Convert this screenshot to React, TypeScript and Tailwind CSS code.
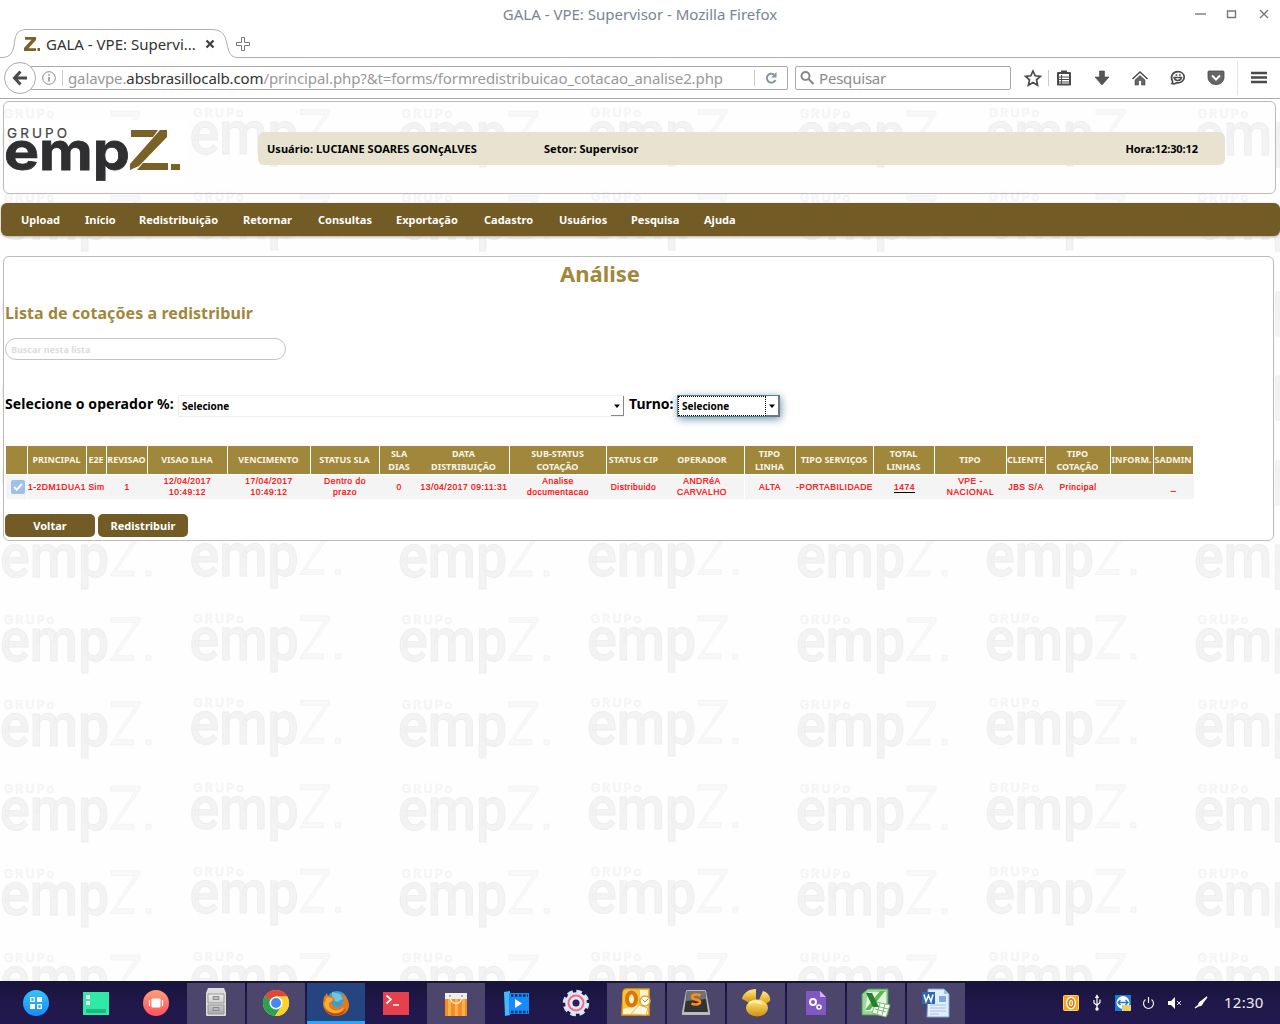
import React from "react";

const SANS = "font-['Noto_Sans',sans-serif]";

function WatermarkLayer() {
  const tiles: { x: number; y: number }[] = [];
  for (let row = 0; row < 11; row++) {
    [0, 189.5, 398, 587, 796, 985, 1194].forEach((x, i) => {
      tiles.push({ x, y: row * 84.4 - (i % 2 ? 1.5 : 0) });
    });
  }
  return (
    <svg className="absolute left-0 top-0 h-full w-full" viewBox="0 0 1280 882" aria-hidden="true">
      <defs>
        <g id="mark">
          <text x="4" y="19" fontFamily="Inter" fontSize="12" fill="#fefefe" stroke="#f2f2f2" strokeWidth="0.7" textLength="50" lengthAdjust="spacing">GRUPo</text>
          <text x="0" y="56" fontFamily="Roboto" fontWeight="500" fontSize="61" fill="#f3f3f3" stroke="#eeeeee" strokeWidth="1" textLength="109" lengthAdjust="spacingAndGlyphs">emp</text>
          <path d="M111 12h29v4l-24 34h18v5h-24l25-38h-24zM146 50h5v5h-5z" fill="#f8f8f8" stroke="#f0f0f0" strokeWidth="0.7" />
        </g>
      </defs>
      {tiles.map((t, i) => (
        <use key={i} href="#mark" x={t.x} y={t.y} />
      ))}
    </svg>
  );
}

function BrandLogo() {
  return (
    <svg width="184" height="66" viewBox="0 0 184 66" className="block overflow-visible">
      <rect x="1" y="1" width="181" height="64" fill="#fff" />
      <text x="3" y="18.500" fontFamily="Inter" fontSize="13.500" fontWeight="400" fill="#444" stroke="#444" strokeWidth="0.2" textLength="60" lengthAdjust="spacing">GRUPO</text>
      <text x="0" y="51" fontFamily="Inter" fontWeight="700" fontSize="54" fill="#2f2f31" stroke="#2f2f31" strokeWidth="0.8" textLength="126" lengthAdjust="spacingAndGlyphs">emp</text>
      <path d="M127 11h27l-5 7h-22zM156 11h7v7l-28 29-9 4v-6zM139 44h25v7h-31zM167 45h9v6h-9z" fill="#7a6128" />
    </svg>
  );
}

function Chrome() {
  return (
    <header className="relative h-[99px] shrink-0 border-b border-[#aaa] bg-white text-[#333]">
      <div className="relative flex h-7 items-center justify-center">
        <span className="text-[15px] text-[#7a8490]">GALA - VPE: Supervisor - Mozilla Firefox</span>
        <svg className="absolute right-[7px] top-2 h-3 w-[80px]" viewBox="0 0 80 12" fill="none" stroke="#777" strokeWidth="1.4">
          <path d="M2 6h11" />
          <path d="M34.500 3h8v6.500h-8z" />
          <path d="M67 2l8 8M75 2l-8 8" />
        </svg>
      </div>
      <div className="relative h-[30px]">
        <svg className="absolute left-0 top-0 h-[30px] w-full" viewBox="0 0 1280 30" fill="none">
          <path d="M0 29.500C9 29.500 12 27 14 18C15 8 16 1.500 27 1.500H211C222 1.500 225 6 227 16C229 26 231 29.500 238 29.500H1280" stroke="#a9afb5" />
          <path d="M25 9h11v3l-7.500 8.200H36v2.800H24v-3l7.500-8.200H25z" fill="#7a6128" />
          <path d="M37.500 20h2.500v3h-2.500z" fill="#7a6128" />
          <path d="M206.500 12.500l7 7M213.500 12.500l-7 7" stroke="#444" strokeWidth="2.4" />
          <path d="M241.500 9.500h3v5h5v3h-5v5h-3v-5h-5v-3h5z" stroke="#777" />
        </svg>
        <span className="absolute left-[46px] top-[6px] text-[15px] leading-[20px] text-[#333]">GALA - VPE: Supervi...</span>
      </div>
      <div className="flex h-10 items-center pl-[4px]">
        <div className="relative z-10 flex size-8 items-center justify-center rounded-full border border-[#aaa] bg-white">
          <svg width="16" height="16" viewBox="0 0 16 16" fill="none" stroke="#4a4a4a" strokeWidth="3">
            <path d="M8.500 1.500L2.500 8l6 6.500M3 8h12" />
          </svg>
        </div>
        <div className="-ml-[6px] flex h-6 w-[758px] items-center rounded-[2px] border border-[#aaa] pl-[11px]">
          <svg width="14" height="14" viewBox="0 0 14 14" fill="none" stroke="#8a8a8a">
            <circle cx="7" cy="7" r="6.300" />
            <path d="M7 6v4.500M7 3.300v1.500" strokeWidth="1.5" />
          </svg>
          <span className="ml-[6px] h-4 w-px bg-[#ccc]" />
          <span className="ml-[5px] whitespace-nowrap text-[15px] tracking-[-0.115px] text-[#999]">
            galavpe.<span className="text-[#333]">absbrasillocalb.com</span>/principal.php?&amp;t=forms/formredistribuicao_cotacao_analise2.php
          </span>
          <span className="ml-auto h-4 w-px bg-[#ccc]" />
          <svg className="ml-[10px] mr-[10px]" width="12" height="12" viewBox="0 0 12 12" fill="none" stroke="#8995a3" strokeWidth="2">
            <path d="M9 2.500A4.500 4.500 0 1 0 10.500 8" />
            <path d="M11.500 0v5.500H6z" fill="#8995a3" stroke="none" />
          </svg>
        </div>
        <div className="ml-[7px] flex h-6 w-[216px] items-center rounded-[2px] border border-[#aaa] pl-1">
          <svg width="14" height="14" viewBox="0 0 14 14" fill="none" stroke="#888" strokeWidth="2">
            <circle cx="5.500" cy="5" r="4" />
            <path d="M8.500 8l5 5" />
          </svg>
          <span className="ml-[5px] text-[15px] tracking-[-0.200px] text-[#8b8b8b]">Pesquisar</span>
        </div>
        <svg className="ml-[9px] block" width="256" height="36" viewBox="1020 60 256 36" fill="none" stroke="#4a4a4a">
          <path d="M1033 71l2.200 4.800 5.200.6-3.900 3.500 1.100 5.300-4.600-2.700-4.600 2.700 1.100-5.300-3.900-3.500 5.200-.6z" strokeWidth="1.700" />
          <path d="M1048.500 70v16" stroke="#ccc" />
          <path d="M1058 73h12v11.500h-12z" strokeWidth="2" strokeLinejoin="round" />
          <path d="M1061 70.500h6v3.500h-6z" fill="#4a4a4a" stroke="none" />
          <path d="M1059 77h10M1059 79.500h10M1059 82h10M1061.500 75v9" strokeWidth="1" />
          <path d="M1099.500 71h5v6h4.500l-7 8-7-8h4.500z" fill="#555" stroke="#444" strokeWidth="0.600" />
          <path d="M1132.500 79l7.500-7 7.500 7" strokeWidth="1.500" />
          <path d="M1135 80l5-4.500 5 4.500v5h-3.500v-4.500h-3V85h-3.500z" fill="#666" stroke="#444" strokeWidth="0.600" />
          <path d="M1172 83.500c1-1 1-1.500.5-2.500-2.500-4 0-9.300 5.200-9.300 4 0 6.500 2.500 6.500 5.500 0 4-4 6-7.500 5.500-1.200 1-3 1.300-4.700.8z" strokeWidth="1.700" />
          <path d="M1174 77.500c1 4 6.500 4 7.500 0zM1175.500 75h1.800M1179 75h1.800" strokeWidth="1.400" />
          <path d="M1209 71h14q1 0 1 1v5c0 10-16 10-16 0v-5q0-1 1-1z" fill="#666" stroke="#444" strokeWidth="0.800" />
          <path d="M1212 75.500l4 4 4-4" stroke="#fff" strokeWidth="2" />
          <path d="M1237.500 61v34" stroke="#e4e4e4" />
          <path d="M1251 73h16M1251 77.500h16M1251 82h16" strokeWidth="2.500" />
        </svg>
      </div>
    </header>
  );
}

const MENU: [string, string][] = [
  ["Upload", "w-[64px]"],
  ["Início", "w-[54px]"],
  ["Redistribuição", "w-[104px]"],
  ["Retornar", "w-[75px]"],
  ["Consultas", "w-[78px]"],
  ["Exportação", "w-[88px]"],
  ["Cadastro", "w-[75px]"],
  ["Usuários", "w-[72px]"],
  ["Pesquisa", "w-[73px]"],
  ["Ajuda", "w-[50px]"],
];

type Column = { w: number; head: string[]; body: string[]; join?: boolean; gap?: boolean; link?: boolean };

const COLUMNS: Column[] = [
  { w: 22, head: [], body: [], gap: true },
  { w: 59, head: ["PRINCIPAL"], body: ["1-2DM1DUA1"] },
  { w: 20, head: ["E2E"], body: ["Sim"] },
  { w: 41, head: ["REVISAO"], body: ["1"] },
  { w: 80, head: ["VISAO ILHA"], body: ["12/04/2017", "10:49:12"] },
  { w: 83, head: ["VENCIMENTO"], body: ["17/04/2017", "10:49:12"] },
  { w: 69, head: ["STATUS SLA"], body: ["Dentro do", "prazo"] },
  { w: 39, head: ["SLA", "DIAS"], body: ["0"], join: true },
  { w: 91, head: ["DATA", "DISTRIBUIÇÃO"], body: ["13/04/2017 09:11:31"] },
  { w: 97, head: ["SUB-STATUS", "COTAÇÃO"], body: ["Analise", "documentacao"] },
  { w: 54, head: ["STATUS CIP"], body: ["Distribuido"], join: true },
  { w: 84, head: ["OPERADOR"], body: ["ANDRéA", "CARVALHO"], gap: true },
  { w: 51, head: ["TIPO", "LINHA"], body: ["ALTA"] },
  { w: 78, head: ["TIPO SERVIÇOS"], body: ["-PORTABILIDADE"] },
  { w: 61, head: ["TOTAL", "LINHAS"], body: ["1474"], link: true },
  { w: 72, head: ["TIPO"], body: ["VPE -", "NACIONAL"] },
  { w: 39, head: ["CLIENTE"], body: ["JBS S/A"] },
  { w: 65, head: ["TIPO", "COTAÇÃO"], body: ["Principal"] },
  { w: 43, head: ["INFORM."], body: [] },
  { w: 40, head: ["SADMIN"], body: ["_"] },
];

function Lines({ lines }: { lines: string[] }) {
  return (
    <>
      {lines.map((l) => (
        <div key={l}>{l}</div>
      ))}
    </>
  );
}

function QuoteTable() {
  return (
    <table className="w-[1188px] table-fixed border-separate border-spacing-0">
      <colgroup>
        {COLUMNS.map((c, i) => (
          <col key={i} style={{ width: c.w }} />
        ))}
      </colgroup>
      <thead>
        <tr className="h-[29px]">
          {COLUMNS.map((c, i) => (
            <th
              key={i}
              className={`whitespace-nowrap border-b border-b-white bg-[#a1873c] p-0 pb-px text-center align-middle text-[9px] font-bold leading-[13px] text-[#f7f4e6] ${c.join ? "" : "border-r border-r-white"}`}
            >
              <div className="-ml-[9px] -mr-2"><Lines lines={c.head} /></div>
            </th>
          ))}
        </tr>
      </thead>
      <tbody>
        <tr className="h-[24px]">
          {COLUMNS.map((c, i) => (
            <td
              key={i}
              className={`whitespace-nowrap bg-[#f4f4f4] p-0 text-center align-middle font-['Liberation_Sans',sans-serif] text-[8.500px] font-normal leading-[11px] tracking-[0.500px] text-[#f00] [-webkit-text-stroke:0.22px_#f00] ${c.gap ? "border-r border-r-white" : ""}`}
            >
              {i === 0 ? (
                <div className="ml-[5px] flex size-[14px] items-center justify-center rounded-[2px] bg-[#9fc0ea]">
                  <svg width="10" height="8" viewBox="0 0 10 8" fill="none" stroke="#fff" strokeWidth="2">
                    <path d="M1 4l2.700 2.700L9 1" />
                  </svg>
                </div>
              ) : c.link ? (
                <span className="border-b border-black">{c.body[0]}</span>
              ) : (
                <div className="-ml-[9px] -mr-2"><Lines lines={c.body} /></div>
              )}
            </td>
          ))}
        </tr>
      </tbody>
    </table>
  );
}

function Caret() {
  return (
    <svg width="6" height="4" viewBox="0 0 6 4">
      <path d="M0 0.500h6L3 4z" fill="#000" />
    </svg>
  );
}

function Page() {
  return (
    <main className="relative flex h-[882px] shrink-0 flex-col overflow-hidden bg-[#fefefe]">
      <WatermarkLayer />
      <section className="relative ml-[3px] mt-[2px] flex h-[93px] w-[1273px] shrink-0 rounded-[6px] border border-[#bbb]">
        <div className="mt-[17px]"><BrandLogo /></div>
        <div className="ml-[70px] mt-[30px] flex h-[33px] w-[967px] items-center rounded-[6px] bg-[#e7e3d0] pl-[9px] pr-[27px] pt-[2px] text-[11px] font-bold tracking-[0.040px] text-black">
          <span className="w-[277px]">Usuário: LUCIANE SOARES GONçALVES</span>
          <span>Setor: Supervisor</span>
          <span className="ml-auto tracking-[-0.080px]">Hora:12:30:12</span>
        </div>
      </section>
      <nav className="relative ml-px mt-[9px] flex h-[33px] shrink-0 items-center rounded-[6px] bg-[#735b25] pl-[20px] pt-px text-[11px] font-bold text-white shadow-[0_1px_3px_#aaa]">
        {MENU.map(([label, w]) => (
          <span key={label} className={`${w} whitespace-nowrap`}>{label}</span>
        ))}
      </nav>
      <section className="relative ml-[3px] mt-[20px] flex h-[285px] w-[1271px] shrink-0 flex-col rounded-[6px] border border-[#bbb] bg-white pl-px">
        <h1 className="mt-px w-[1190px] text-center text-[22px] font-bold leading-[30px] text-[#a1873c]">Análise</h1>
        <h2 className="mt-[14px] text-[16px] font-bold leading-[22px] tracking-[0.080px] text-[#a1873c]">Lista de cotações a redistribuir</h2>
        <div className="mt-[14px] flex h-[22px] w-[281px] items-center rounded-full border border-[#c4c4c4] pl-[5px] pt-px text-[9px] font-bold text-[#ddd]">Buscar nesta lista</div>
        <div className="mt-[35px] flex h-[22px] items-center text-[14px] font-bold text-black">
          <span className="w-[173px] -translate-y-[3px] whitespace-nowrap tracking-[0.090px]">Selecione o operador %:</span>
          <div className="flex h-[22px] w-[446px] items-center border border-[#eee] bg-white pl-[3px] text-[10px]">
            <span>Selecione</span>
            <span className="-mr-px ml-auto flex h-full w-[13px] items-center justify-center border-b border-r border-[#888]"><Caret /></span>
          </div>
          <span className="ml-[5px] w-[48px] -translate-y-[3px]">Turno:</span>
          <div className="flex h-[22px] w-[103px] items-center border border-[#5b7d8a] bg-white text-[10px] shadow-[1px_2px_8px_#6f95a5]">
            <span className="flex h-full w-[88px] items-center border border-dotted border-black pl-[3px]">Selecione</span>
            <span className="flex h-full w-[13px] items-center justify-center border-b border-r border-[#777]"><Caret /></span>
          </div>
        </div>
        <div className="ml-px mt-[29px]"><QuoteTable /></div>
        <div className="mt-[15px] flex gap-[3px] text-[11px] font-bold text-white">
          <button className="h-[23px] w-[90px] rounded-[5px] bg-[#735b25] pt-px">Voltar</button>
          <button className="h-[23px] w-[90px] rounded-[5px] bg-[#735b25] pt-px">Redistribuir</button>
        </div>
      </section>
    </main>
  );
}

const ICONS: React.ReactNode[] = [
  <g>
    <circle cx="16" cy="16" r="13" fill="url(#blue)" />
    <path d="M17 10h5v5h-5zM10 17h5v5h-5z" fill="#fff" />
    <path d="M10.700 10.700h3.600v3.600h-3.600zM17.700 17.700h3.600v3.600h-3.600z" fill="none" stroke="#fff" strokeWidth="1.300" />
  </g>,
  <g>
    <path d="M3 5h26v23H3z" fill="#2fe9a5" />
    <path d="M6 8h4v4H6zM6 14h4v4H6z" fill="#e7fff5" />
    <path d="M6 22h20v4H6z" fill="#1fb883" />
  </g>,
  <g>
    <circle cx="16" cy="16" r="13" fill="url(#coral)" />
    <rect x="11.500" y="11.500" width="9" height="9" rx="1" fill="#fff" />
    <path d="M9.500 13v6M22.500 13v6" stroke="#fff" strokeWidth="1.200" />
  </g>,
  <g>
    <path d="M8 1h16l2 5v22q0 1-1 1H7q-1 0-1-1V6z" fill="#dededa" />
    <path d="M8 7h16v9H8zM8 18h16v9H8z" fill="url(#silver)" stroke="#999" />
    <path d="M13 9.500h6v3h-6zM13 20.500h6v3h-6z" fill="#bbb" stroke="#777" strokeWidth="0.700" />
  </g>,
  <g>
    <circle cx="16" cy="16" r="13" fill="#fdd22f" />
    <path d="M16 16L4.700 9.500A13 13 0 0 1 27.300 9.500H16z" fill="#e2453a" />
    <path d="M4.700 9.500A13 13 0 0 0 15 29l6-9.500-5-3.500z" fill="#2ba24c" />
    <path d="M16 9.500h11.300A13 13 0 0 1 15 29l6.500-10z" fill="#fdd22f" />
    <circle cx="16" cy="16" r="6.500" fill="#fff" />
    <circle cx="16" cy="16" r="5" fill="#4688ef" />
  </g>,
  <g>
    <circle cx="17" cy="14.500" r="10.500" fill="#3f9ec9" />
    <path d="M12 5l8 2 3 5-6 3-5-3z" fill="#8ed3e8" opacity="0.700" />
    <path d="M4 10l3-4 1 3 5 1 2 3-4 2c1 6 8 7 11 3 3-4 1-9-1-12 6 3 8 8 8 12 0 7-6 11-13 11C8 29 3 23 3 16z" fill="#e77a18" />
    <path d="M7 10l5 1 1 2-4 3c-1 8 9 10 15 4-3 9-17 8-20-3z" fill="#f6ad32" />
    <path d="M4 20c4 8 17 9 22 1-2 10-18 11-22-1z" fill="#bd4714" />
  </g>,
  <g>
    <path d="M3 5h26v23H3z" fill="#e5404b" />
    <path d="M6.500 8.500l4.500 4-4.500 4M13 18h6" fill="none" stroke="#fff" strokeWidth="1.700" />
  </g>,
  <g>
    <path d="M5 6h22v23H5z" fill="#f88b22" />
    <path d="M8 11h3v18H8zM15 11h3v18h-3zM22 11h3v18h-3z" fill="#ffb052" />
    <path d="M5 6h22v6H5z" fill="#eee" />
    <path d="M10 9c0 10 12 10 12 0" fill="none" stroke="#fff2d8" strokeWidth="1.400" />
    <circle cx="10" cy="9" r="1" fill="#999" />
    <circle cx="22" cy="9" r="1" fill="#999" />
  </g>,
  <g>
    <path d="M4 5l6-1v24l-5 1z" fill="#45b9ff" />
    <path d="M9 6h20v21H9z" fill="#158afa" />
    <path d="M11 8.500h17M11 25h17" stroke="#152b66" strokeWidth="2.500" strokeDasharray="2.500 1.500" />
    <path d="M15 12l7 4.500-7 4.500z" fill="#fff" />
  </g>,
  <g>
    <circle cx="16" cy="16" r="11.500" fill="none" stroke="#d6e5f6" strokeWidth="3.500" strokeDasharray="5.500 3.532" />
    <circle cx="16" cy="16" r="10.800" fill="#dce9f8" />
    <circle cx="16" cy="16" r="7.500" fill="none" stroke="#ff6680" strokeWidth="2" />
    <circle cx="16" cy="16" r="3.500" fill="#2c2057" />
  </g>,
  <g>
    <path d="M3 6q0-4 4-4h22v26H2z" fill="#fff3cc" stroke="#e79e14" strokeWidth="1.500" />
    <path d="M3 22V6q0-3 4-3h13v15z" fill="#f5c33e" />
    <ellipse cx="11.500" cy="12" rx="4.500" ry="6.500" fill="#fff0c0" stroke="#d8770b" strokeWidth="4" />
    <path d="M11 27l8-9 9 3-2 7z" fill="#fff7e2" stroke="#eeb54d" />
    <circle cx="25" cy="14" r="5" fill="#fff" stroke="#e7a026" strokeWidth="1.500" />
    <path d="M22.500 12.500l2.500 2.500 3-3" fill="none" stroke="#d07b14" />
  </g>,
  <g>
    <path d="M6 4q0-1 2-1h16q2 0 2 1l4 21v3H2v-3z" fill="#bbb" />
    <path d="M7 4h18l3 21H4z" fill="#333" />
    <path d="M7 4h18l1 8-20 2z" fill="#727272" />
    <path d="M20.500 8.500c-3-1.500-8.500-1.500-8.500 1.500 0 3.500 8 1.700 8 5 0 3-5.500 3-8.500 1.500" fill="none" stroke="#ff8b1c" strokeWidth="2.700" />
  </g>,
  <g>
    <path d="M2 12C3 6 9 2 16 2v11q-7 5-10 1z" fill="url(#gold)" />
    <path d="M19 13l4-9c4 1 8 5 7 10l-7 5z" fill="url(#gold)" />
    <ellipse cx="17" cy="21" rx="11" ry="8.500" fill="url(#gold)" />
    <path d="M9 16q7-3 13 1" fill="none" stroke="#fff3a8" strokeWidth="2" />
  </g>,
  <g>
    <path d="M6 4h14l6 6v18H6z" fill="#8057c4" />
    <path d="M20 4v6h6z" fill="#d0b6ef" />
    <circle cx="13" cy="15" r="3" fill="none" stroke="#fff" strokeWidth="2" />
    <circle cx="19" cy="20" r="2" fill="none" stroke="#fff" strokeWidth="1.600" />
  </g>,
  <g>
    <path d="M8 2h20v26H2V7z" fill="#9ed69f" stroke="#4a9848" />
    <path d="M8 5h18v19H5z" fill="#dff4d9" />
    <path d="M16 15l14 3-4 12-14-4z" fill="#f4fbef" stroke="#82b580" />
    <path d="M16 19l12 3M15 22l11 3M20 16l-3 11M25 17l-3 11" stroke="#82b580" />
    <path d="M20 4h5L10 23H5z" fill="#5cb84c" />
    <path d="M6 6h6l7 14h-6z" fill="#24802e" />
  </g>,
  <g>
    <path d="M8 2h16l5 5v23H7z" fill="#e3eefd" stroke="#769fd6" />
    <path d="M24 2v5h5z" fill="#9dc0ed" />
    <path d="M19 9h7v6h-7z" fill="#7da8df" />
    <path d="M10 18h16M10 21h16M10 24h16M10 27h9" stroke="#a7c4e9" />
    <path d="M2 5h13v12H2z" fill="#2e68b9" />
    <path d="M4 7.500l2 7 2.500-6 2.500 6 2-7" fill="none" stroke="#fff" strokeWidth="1.500" />
  </g>,
];

function Tray() {
  return (
    <svg className="ml-auto block" width="152" height="20" viewBox="0 0 152 20" fill="none">
      <rect x="1.500" y="2.500" width="15" height="15" rx="1" fill="#f8a51b" stroke="#ffce66" />
      <ellipse cx="9" cy="10" rx="3" ry="4.500" fill="#f8a51b" stroke="#fff" strokeWidth="4" />
      <ellipse cx="9" cy="10" rx="2.800" ry="4.200" stroke="#d87a0c" strokeWidth="1.700" />
      <path d="M35 3v13M32 7v3l3 2.500 3-3V6.500M33.500 5L35 2.500 36.500 5" stroke="#fff" strokeWidth="1.200" />
      <circle cx="35" cy="16" r="1.700" fill="#fff" />
      <rect x="53" y="2" width="16" height="16" fill="#167bdc" />
      <circle cx="61" cy="9.500" r="6.500" fill="#fff" />
      <path d="M56 9.500h10M58.500 7L56 9.500l2.500 2.500M63.500 7l2.500 2.500-2.500 2.500" stroke="#167bdc" strokeWidth="1.300" />
      <path d="M60 12h9v6h-9z" fill="#edcf60" />
      <path d="M83.500 6.500a5 5 0 1 0 6 0M86.500 4v6" stroke="#eee" strokeWidth="1.200" />
      <path d="M106 8h3l4-4v12l-4-4h-3z" fill="#fff" />
      <path d="M115 8l4 4M119 8l-4 4" stroke="#ddd" />
      <path d="M133 15l4-3c-1-3 2-3 4-5l4-3-4 5c-1 3-2 4-4 3.500z" fill="#fff" stroke="#fff" strokeWidth="1.300" />
    </svg>
  );
}

function Taskbar() {
  return (
    <footer className="flex h-[43px] shrink-0 items-center bg-linear-to-b from-[#17133b] via-[#201849] to-[#21194e] pl-[7px]">
      <svg className="absolute" width="0" height="0">
        <defs>
          <linearGradient id="blue" x2="0" y2="1"><stop stopColor="#32c5ff" /><stop offset="1" stopColor="#188afb" /></linearGradient>
          <linearGradient id="coral" x2="0" y2="1"><stop stopColor="#ff9e7b" /><stop offset="1" stopColor="#ff515c" /></linearGradient>
          <linearGradient id="silver" x2="0" y2="1"><stop stopColor="#eee" /><stop offset="1" stopColor="#aaa" /></linearGradient>
          <linearGradient id="gold" x2="0" y2="1"><stop stopColor="#ffeb83" /><stop offset="1" stopColor="#d48d09" /></linearGradient>
        </defs>
      </svg>
      <div className="flex h-full items-center gap-[2px]">
        {ICONS.map((icon, i) => {
          const open = i === 3 || i === 4 || i === 7 || i >= 10;
          const tone = i === 5 ? "border-b-[3px] border-[#2ca7f8] bg-[#24457f] pt-[3px]" : open ? "bg-[#4d466c]" : "";
          return (
            <div key={i} className={`mt-px flex h-[41px] w-[58px] items-center justify-center ${tone}`}>
              <svg width="32" height="32" viewBox="0 0 32 32">{icon}</svg>
            </div>
          );
        })}
      </div>
      <Tray />
      <span className="ml-[10px] mr-[16px] w-[40px] whitespace-nowrap text-[15px] tracking-[0.250px] text-[#eee]">12:30</span>
    </footer>
  );
}

export default function App() {
  return (
    <div className={`flex h-[1024px] w-[1280px] flex-col overflow-hidden bg-white ${SANS}`}>
      <Chrome />
      <Page />
      <Taskbar />
    </div>
  );
}
